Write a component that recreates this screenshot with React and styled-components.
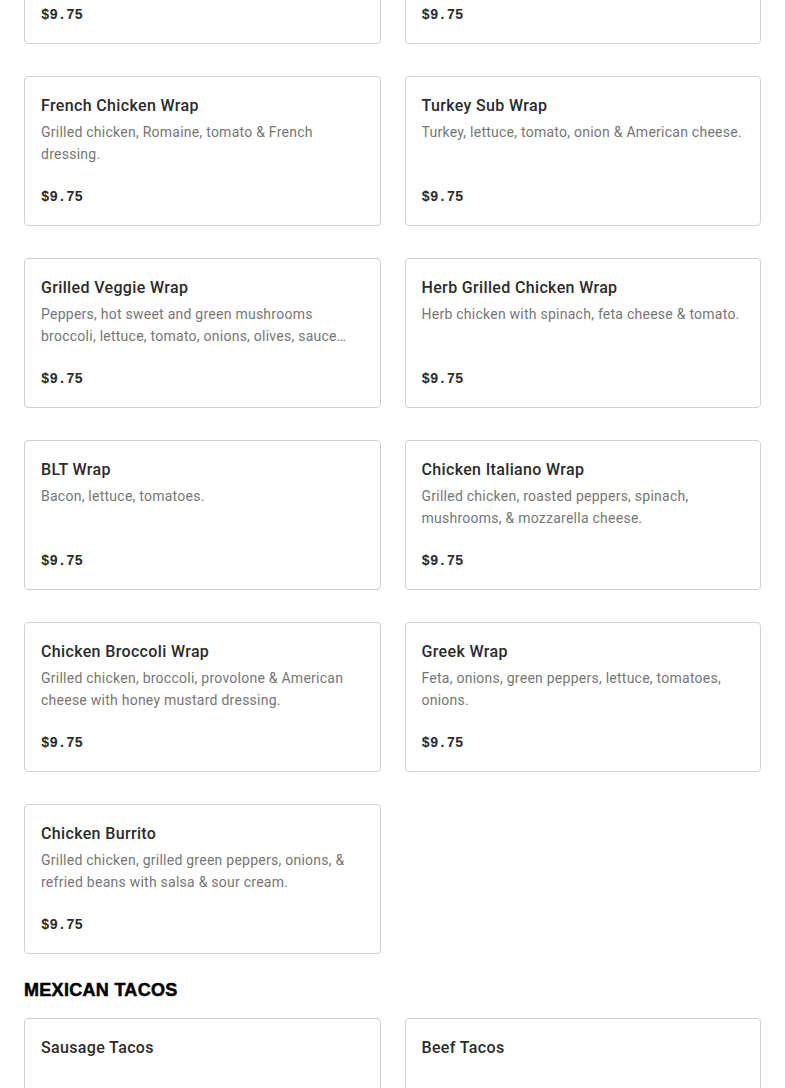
import React from "react";
import styled, { createGlobalStyle } from "styled-components";

const wraps = [
  { name: "Chicken Caesar Wrap", desc: "Grilled chicken, Romaine, parmesan & Caesar dressing." },
  { name: "Buffalo Chicken Wrap", desc: "Buffalo chicken, lettuce, tomato & blue cheese." },
  { name: "French Chicken Wrap", desc: "Grilled chicken, Romaine, tomato & French dressing." },
  { name: "Turkey Sub Wrap", desc: "Turkey, lettuce, tomato, onion & American cheese." },
  {
    name: "Grilled Veggie Wrap",
    desc: "Peppers, hot sweet and green mushrooms broccoli, lettuce, tomato, onions, olives, sauce and cheese.",
  },
  { name: "Herb Grilled Chicken Wrap", desc: "Herb chicken with spinach, feta cheese & tomato." },
  { name: "BLT Wrap", desc: "Bacon, lettuce, tomatoes." },
  { name: "Chicken Italiano Wrap", desc: "Grilled chicken, roasted peppers, spinach, mushrooms, & mozzarella cheese." },
  {
    name: "Chicken Broccoli Wrap",
    desc: "Grilled chicken, broccoli, provolone & American cheese with honey mustard dressing.",
  },
  { name: "Greek Wrap", desc: "Feta, onions, green peppers, lettuce, tomatoes, onions." },
  { name: "Chicken Burrito", desc: "Grilled chicken, grilled green peppers, onions, & refried beans with salsa & sour cream." },
];

const tacos = [{ name: "Sausage Tacos" }, { name: "Beef Tacos" }];

const MenuCard = ({ name, desc, price = "$9.75" }) => (
  <Card>
    <Title>{name}</Title>
    <Desc>{desc}</Desc>
    <Price>{price}</Price>
  </Card>
);

const App = () => (
  <>
    <GlobalStyle />
    <Page>
      <Grid>
        {wraps.map((w) => (
          <MenuCard key={w.name} {...w} />
        ))}
      </Grid>
      <Heading>MEXICAN TACOS</Heading>
      <Grid>
        {tacos.map((t) => (
          <MenuCard key={t.name} {...t} />
        ))}
      </Grid>
    </Page>
  </>
);

const GlobalStyle = createGlobalStyle`
  body {
    margin: 0;
    background: #fff;
    font-family: Roboto, "Liberation Sans", sans-serif;
    overflow: hidden;
  }
`;

const Page = styled.div`
  padding: 0 24px;
  margin-top: -106px;
`;

const Grid = styled.div`
  display: grid;
  grid-template-columns: 1fr 1fr;
  column-gap: 24px;
  row-gap: 32px;
`;

const Card = styled.div`
  box-sizing: border-box;
  height: 150px;
  border: 1px solid #d2d2d2;
  border-radius: 4px;
  padding: 16px;
  display: flex;
  flex-direction: column;
  background: #fff;
`;

const Title = styled.div`
  flex-shrink: 0;
  padding-top: 1px;
  font-size: 16px;
  line-height: 24px;
  font-weight: 500;
  letter-spacing: 0.35px;
  color: #2b2b2b;
`;

const Desc = styled.div`
  flex-shrink: 0;
  margin-top: 3px;
  height: 44px;
  font-size: 14px;
  line-height: 22px;
  letter-spacing: 0.25px;
  color: #767676;
  display: -webkit-box;
  -webkit-line-clamp: 2;
  -webkit-box-orient: vertical;
  overflow: hidden;
`;

const Price = styled.div`
  flex-shrink: 0;
  margin-top: 21px;
  font-family: "Liberation Mono", "DejaVu Sans Mono", monospace;
  font-weight: 700;
  font-size: 14px;
  line-height: 23px;
  color: #2b2b2b;
`;

const Heading = styled.h2`
  margin: 24px 0 15px;
  font-family: "Liberation Sans", Arial, sans-serif;
  font-weight: 900;
  font-size: 18px;
  line-height: 25px;
  letter-spacing: 0.3px;
  color: #000;
  -webkit-text-stroke: 0.5px #000;
`;

export default App;
